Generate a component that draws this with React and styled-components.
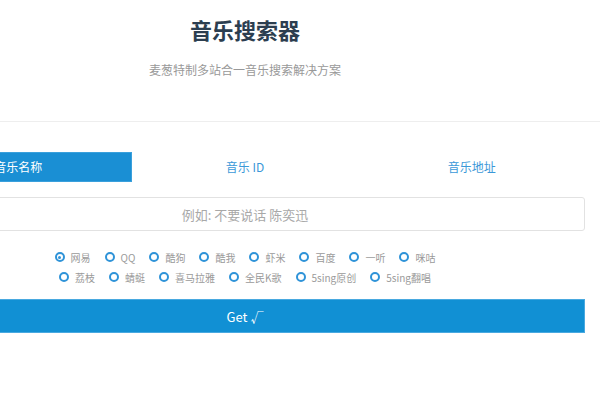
import React, { useState } from "react";
import styled, { createGlobalStyle } from "styled-components";

const Global = createGlobalStyle`
  html, body { margin: 0; padding: 0; background: #fff; overflow: hidden; }
  body { font-family: "Noto Sans CJK SC", "Noto Sans", sans-serif; }
`;

const Page = styled.div`
  width: 600px;
  height: 400px;
  overflow: hidden;
`;

const Header = styled.header`
  border-bottom: 1px solid #eeeeee;
  padding: 14px 0 42px;
`;

const Column = styled.div`
  width: 680px;
  margin-left: -95px;
`;

const Title = styled.h1`
  margin: 0;
  text-align: center;
  font-size: 22px;
  line-height: 30px;
  font-weight: 700;
  color: #2c3e50;
`;

const Subtitle = styled.p`
  margin: 17px 0 0;
  text-align: center;
  font-size: 12px;
  line-height: 18px;
  color: #999;
`;

const Main = styled(Column)`
  padding-top: 30px;
`;

const Tabs = styled.div`
  display: grid;
  grid-template-columns: repeat(3, 1fr);
  height: 30px;
`;

const Tab = styled.button`
  border: none;
  margin: 0;
  padding: 0;
  font-family: inherit;
  font-size: 12px;
  line-height: 30px;
  height: 30px;
  text-align: center;
  cursor: pointer;
  background: ${(p) => (p.$active ? "#1a8fd4" : "transparent")};
  color: ${(p) => (p.$active ? "#fff" : "#3b98d8")};
  box-shadow: ${(p) => (p.$active ? "inset 0 0 0 1px #3aa0dc" : "none")};
`;

const Input = styled.input`
  display: block;
  box-sizing: border-box;
  width: 100%;
  height: 34px;
  margin-top: 15px;
  border: 1px solid #e2e2e2;
  border-radius: 3px;
  font-family: inherit;
  font-size: 13px;
  text-align: center;
  color: #555;
  outline: none;
  &::placeholder { color: #a8a8a8; }
`;

const Sources = styled.div`
  display: flex;
  flex-wrap: wrap;
  justify-content: center;
  column-gap: 14px;
  width: 400px;
  margin: 16px auto 0;
`;

const Option = styled.label`
  display: flex;
  align-items: center;
  gap: 6px;
  height: 20px;
  font-size: 10px;
  color: #9a9a9a;
  cursor: pointer;
`;

const Ring = styled.span`
  position: relative;
  box-sizing: border-box;
  width: 10px;
  height: 10px;
  border-radius: 50%;
  border: 2px solid #2f93d8;
  &::after {
    content: "";
    display: ${(p) => (p.$checked ? "block" : "none")};
    position: absolute;
    left: 50%;
    top: 50%;
    width: 3px;
    height: 3px;
    margin: -1.5px 0 0 -1.5px;
    border-radius: 50%;
    background: #2f93d8;
  }
`;

const GetButton = styled.button`
  display: block;
  width: 100%;
  height: 34px;
  margin-top: 12px;
  background: #1190d4;
  border: 1px solid #49a9e0;
  color: #fff;
  font-family: inherit;
  font-size: 13px;
  cursor: pointer;
`;

const tabs = ["音乐名称", "音乐 ID", "音乐地址"];
const sources = [
  "网易", "QQ", "酷狗", "酷我", "虾米", "百度", "一听", "咪咕",
  "荔枝", "蜻蜓", "喜马拉雅", "全民K歌", "5sing原创", "5sing翻唱",
];

export default function App() {
  const [tab, setTab] = useState(0);
  const [src, setSrc] = useState(0);
  return (
    <Page>
      <Global />
      <Header>
        <Column>
          <Title>音乐搜索器</Title>
          <Subtitle>麦葱特制多站合一音乐搜索解决方案</Subtitle>
        </Column>
      </Header>
      <Main>
        <Tabs>
          {tabs.map((t, i) => (
            <Tab key={t} $active={tab === i} onClick={() => setTab(i)}>
              {t}
            </Tab>
          ))}
        </Tabs>
        <Input placeholder="例如: 不要说话 陈奕迅" />
        <Sources>
          {sources.map((s, i) => (
            <Option key={s} onClick={() => setSrc(i)}>
              <Ring $checked={src === i} />
              {s}
            </Option>
          ))}
        </Sources>
        <GetButton>Get √</GetButton>
      </Main>
    </Page>
  );
}
